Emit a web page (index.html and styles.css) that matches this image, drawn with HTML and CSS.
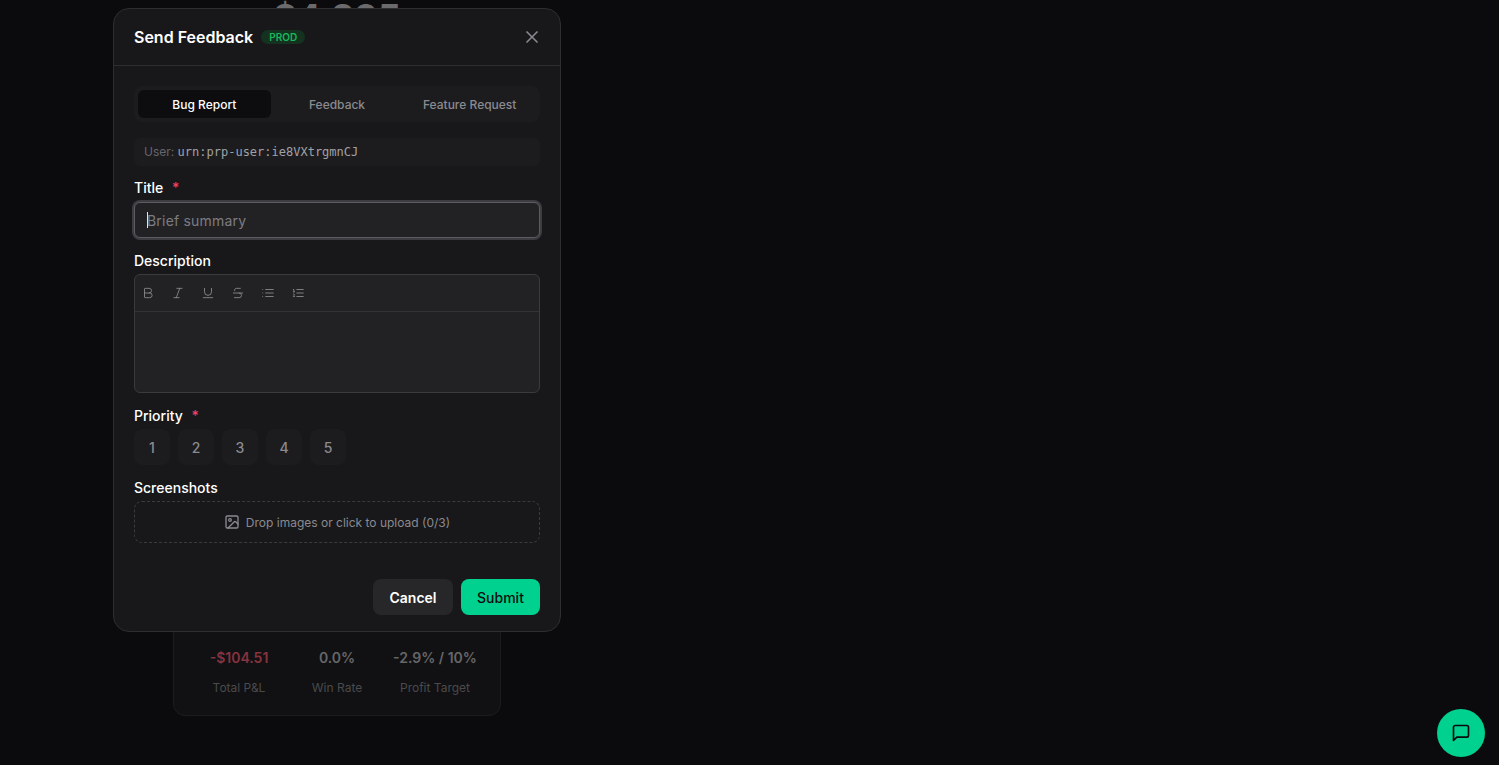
FILE: index.html

```html
<!DOCTYPE html>
<html lang="en">
<head>
    <meta charset="UTF-8">
    <meta name="viewport" content="width=device-width, initial-scale=1.0">
    <title>Send Feedback</title>
    <link rel="stylesheet" href="styles.css">
</head>

<body>
    <div class="page">
        <div class="balance">$4,895</div>
        <div class="stats-card">
            <div class="stat">
                <div class="stat-value loss">-$104.51</div>
                <div class="stat-label">Total P&amp;L</div>
            </div>
            <div class="stat">
                <div class="stat-value">0.0%</div>
                <div class="stat-label">Win Rate</div>
            </div>
            <div class="stat">
                <div class="stat-value">-2.9% / 10%</div>
                <div class="stat-label">Profit Target</div>
            </div>
        </div>
    </div>

    <div class="modal">
        <div class="modal-head">
            <h2>Send Feedback</h2>
            <span class="badge">PROD</span>
            <button class="close-btn" aria-label="Close">
                <svg viewBox="0 0 24 24" width="20" height="20"><path d="M18 6 6 18"/><path d="m6 6 12 12"/></svg>
            </button>
        </div>

        <div class="modal-body">
            <div class="tabs">
                <button class="tab active">Bug Report</button>
                <button class="tab">Feedback</button>
                <button class="tab">Feature Request</button>
            </div>

            <div class="user-line">User: <code>urn:prp-user:ie8VXtrgmnCJ</code></div>

            <div class="field title-field">
                <label>Title <span class="req">*</span></label>
                <div class="input"><span class="caret"></span>Brief summary</div>
            </div>

            <div class="field desc-field">
                <label>Description</label>
                <div class="editor">
                    <div class="toolbar">
                        <svg viewBox="0 0 24 24"><path d="M6 12h9a4 4 0 0 1 0 8H7a1 1 0 0 1-1-1V5a1 1 0 0 1 1-1h7a4 4 0 0 1 0 8"/></svg>
                        <svg viewBox="0 0 24 24"><path d="M19 4h-9"/><path d="M14 20H5"/><path d="M15 4 9 20"/></svg>
                        <svg viewBox="0 0 24 24"><path d="M6 4v6a6 6 0 0 0 12 0V4"/><path d="M4 20h16"/></svg>
                        <svg viewBox="0 0 24 24"><path d="M16 4H9a3 3 0 0 0-2.83 4"/><path d="M14 12a4 4 0 0 1 0 8H6"/><path d="M4 12h16"/></svg>
                        <svg viewBox="0 0 24 24"><path d="M8 6h13"/><path d="M8 12h13"/><path d="M8 18h13"/><path d="M3 6h.01"/><path d="M3 12h.01"/><path d="M3 18h.01"/></svg>
                        <svg viewBox="0 0 24 24"><path d="M10 12h11"/><path d="M10 18h11"/><path d="M10 6h11"/><path d="M4 10h2"/><path d="M4 6h1v4"/><path d="M6 18H4c0-1 2-2 2-3s-1-1.5-2-1"/></svg>
                    </div>
                    <div class="editor-area"></div>
                </div>
            </div>

            <div class="field priority-field">
                <label>Priority <span class="req">*</span></label>
                <div class="priority">
                    <button>1</button>
                    <button>2</button>
                    <button>3</button>
                    <button>4</button>
                    <button>5</button>
                </div>
            </div>

            <div class="field shots-field">
                <label>Screenshots</label>
                <div class="dropzone">
                    <svg viewBox="0 0 24 24" width="16" height="16"><rect x="3" y="3" width="18" height="18" rx="2"/><circle cx="9" cy="9" r="2"/><path d="m21 15-3.086-3.086a2 2 0 0 0-2.828 0L6 21"/></svg>
                    Drop images or click to upload (0/3)
                </div>
            </div>
        </div>

        <div class="modal-foot">
            <button class="btn btn-cancel">Cancel</button>
            <button class="btn btn-submit">Submit</button>
        </div>
    </div>

    <button class="chat-btn" aria-label="Chat">
        <svg viewBox="0 0 24 24" width="20" height="20"><path d="M21 15a2 2 0 0 1-2 2H7l-4 4V5a2 2 0 0 1 2-2h14a2 2 0 0 1 2 2z"/></svg>
    </button>
</body>
</html>
```

FILE: styles.css

```css
* {
    box-sizing: border-box;
}
html, body {
    margin: 0;
    height: 100%;
    overflow: hidden;
}
body {
    background: #0b0b0d;
    color: #fff;
    font-family: Inter, "Liberation Sans", sans-serif;
}
button {
    font-family: inherit;
    border: 0;
    padding: 0;
    cursor: pointer;
}
svg {
    fill: none;
    stroke: currentColor;
    stroke-width: 2;
    stroke-linecap: round;
    stroke-linejoin: round;
}

/* page behind the modal */
.page {
    width: 328px;
    margin-left: 173px;
}
.balance {
    font-size: 36px;
    font-weight: 700;
    line-height: 40px;
    text-align: center;
    color: #6b6b6e;
    height: 40px;
    margin-top: -3px;
}
.stats-card {
    height: 500px;
    margin-top: 179px;
    background: #111113;
    border: 1px solid #1c1c1f;
    border-radius: 12px;
    padding: 0 16px 19px;
    display: flex;
    align-items: flex-end;
}
.stat {
    flex: 1;
    text-align: center;
}
.stat-value {
    font-size: 14px;
    font-weight: 600;
    line-height: 20px;
    color: #666668;
    white-space: nowrap;
}
.stat-value.loss {
    color: #86323f;
}
.stat-label {
    font-size: 12px;
    line-height: 16px;
    color: #4a4a4d;
    margin-top: 12px;
}

/* modal */
.modal {
    position: absolute;
    left: 113px;
    top: 8px;
    width: 448px;
    height: 624px;
    background: #18181b;
    border: 1px solid #2e2e32;
    border-radius: 16px;
    display: flex;
    flex-direction: column;
}
.modal-head {
    height: 57px;
    flex: none;
    display: flex;
    align-items: center;
    padding: 0 20px;
    border-bottom: 1px solid #2e2e32;
}
.modal-head h2 {
    margin: 0;
    font-size: 16px;
    font-weight: 600;
    line-height: 24px;
}
.badge {
    margin-left: 8px;
    height: 14px;
    padding: 0 8px;
    border-radius: 7px;
    background: #14321f;
    color: #16b85c;
    font-size: 10px;
    font-weight: 600;
    line-height: 14px;
}
.close-btn {
    margin-left: auto;
    margin-right: -2px;
    width: 20px;
    height: 20px;
    background: none;
    color: #8a8a8f;
}
.modal-body {
    flex: 1;
    padding: 20px 20px 0;
}
.tabs {
    display: flex;
    height: 36px;
    padding: 4px;
    background: #1c1c1f;
    border-radius: 8px;
}
.tab {
    flex: 1;
    background: none;
    color: #8a8a8f;
    font-size: 12px;
    font-weight: 500;
    border-radius: 6px;
}
.tab.active {
    background: #0d0d0f;
    color: #fff;
}
.user-line {
    margin-top: 16px;
    height: 28px;
    padding: 0 10px;
    background: #1c1c1f;
    border-radius: 6px;
    font-size: 12px;
    line-height: 28px;
    color: #66666b;
}
.user-line code {
    font-family: "DejaVu Sans Mono", "Liberation Mono", monospace;
    color: #a1a1a6;
}
.field label {
    display: block;
    font-size: 14px;
    font-weight: 500;
    line-height: 20px;
    margin-bottom: 4px;
}
.title-field {
    margin-top: 12px;
}
.desc-field {
    margin-top: 13px;
}
.desc-field label,
.priority-field label,
.shots-field label {
    margin-bottom: 3px;
}
.priority-field,
.shots-field {
    margin-top: 13px;
}
.req {
    color: #f43f5e;
    margin-left: 5px;
}
.input {
    height: 36px;
    padding: 0 12px;
    display: flex;
    align-items: center;
    background: #222225;
    border: 1px solid #5c5c62;
    border-radius: 6px;
    box-shadow: 0 0 0 2px #3c3c41;
    font-size: 14px;
    letter-spacing: 0.2px;
    color: #7c7c82;
}
.caret {
    width: 1px;
    height: 16px;
    background: #e8e8e8;
    margin-right: -1px;
}
.editor {
    height: 119px;
    background: #222225;
    border: 1px solid #3a3a3f;
    border-radius: 6px;
}
.toolbar {
    height: 37px;
    padding: 0 6px;
    display: flex;
    align-items: center;
    gap: 16px;
    color: #8a8a8f;
    border-bottom: 1px solid #333337;
}
.toolbar svg {
    width: 14px;
    height: 14px;
    stroke-width: 1.5;
}
.priority {
    display: flex;
    gap: 8px;
}
.priority button {
    width: 36px;
    height: 36px;
    background: #1c1c1f;
    color: #8a8a8f;
    border-radius: 8px;
    font-size: 14px;
    font-weight: 500;
}
.dropzone {
    height: 42px;
    display: flex;
    align-items: center;
    justify-content: center;
    gap: 6px;
    border: 1px dashed #3a3a3f;
    border-radius: 8px;
    font-size: 12px;
    color: #8a8a8f;
}
.modal-foot {
    flex: none;
    display: flex;
    justify-content: flex-end;
    gap: 8px;
    padding: 0 20px 16px;
}
.btn {
    height: 36px;
    border-radius: 8px;
    font-size: 14px;
    font-weight: 500;
}
.btn-cancel {
    width: 80px;
    background: #27272a;
    color: #fff;
    font-weight: 600;
}
.btn-submit {
    width: 79px;
    background: #00d18f;
    color: #0b0b0d;
}

.chat-btn {
    position: fixed;
    right: 14px;
    bottom: 8px;
    width: 48px;
    height: 48px;
    border-radius: 50%;
    background: #00d18f;
    color: #0b0b0d;
    display: flex;
    align-items: center;
    justify-content: center;
}
```
